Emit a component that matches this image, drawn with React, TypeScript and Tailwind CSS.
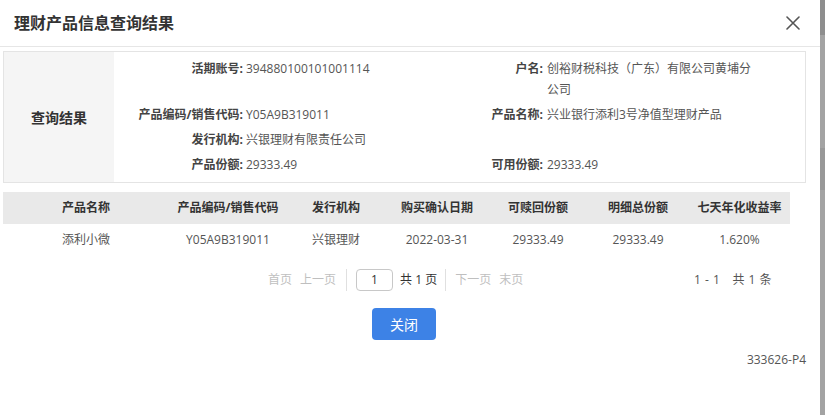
import React from 'react';

const font = "font-['Open_Sans','Noto_Sans_CJK_SC',sans-serif]";

interface InfoRow {
  label: string;
  value: string;
  label2?: string;
  value2?: string;
}

const infoRows: InfoRow[] = [
  { label: '活期账号:', value: '394880100101001114', label2: '户名:', value2: '创裕财税科技（广东）有限公司黄埔分公司' },
  { label: '产品编码/销售代码:', value: 'Y05A9B319011', label2: '产品名称:', value2: '兴业银行添利3号净值型理财产品' },
  { label: '发行机构:', value: '兴银理财有限责任公司' },
  { label: '产品份额:', value: '29333.49', label2: '可用份额:', value2: '29333.49' },
];

const columns = ['产品名称', '产品编码/销售代码', '发行机构', '购买确认日期', '可赎回份额', '明细总份额', '七天年化收益率'];
const rows = [['添利小微', 'Y05A9B319011', '兴银理财', '2022-03-31', '29333.49', '29333.49', '1.620%']];

const gridCols = 'grid grid-cols-[166px_118px_98px_104px_98px_102px_101px]';

export default function App() {
  return (
    <div className={`flex w-[825px] h-[415px] bg-white overflow-hidden ${font}`}>
      <div className="w-[820px] flex flex-col">
        {/* Header */}
        <div className="h-[47px] flex items-center justify-between pl-[14px] pr-[20px] border-b border-[#e6e6e6]">
          <h3 className="text-[16px] font-bold text-[#333] leading-none">理财产品信息查询结果</h3>
          <svg width="14" height="14" viewBox="0 0 14 14" className="text-[#555]">
            <path d="M1 1L13 13M13 1L1 13" stroke="currentColor" strokeWidth="1.6" strokeLinecap="round" />
          </svg>
        </div>

        <div className="px-[3px]">
          {/* Info box */}
          <div className="mt-1 w-[803px] flex border border-[#e4e4e4]">
            <div className="w-[110px] bg-[#f5f5f5] flex items-center justify-center text-[14px] font-bold text-[#333]">
              查询结果
            </div>
            <div className="grid grid-cols-[129px_200px_100px_214px] gap-y-1 pt-[6px] pb-[7px] pr-[48px] text-[12px] leading-[21px]">
              {infoRows.map((r, i) => (
                <React.Fragment key={i}>
                  <div className={`text-right font-bold text-[#444] ${i === 0 ? 'row-span-1' : ''}`}>{r.label}</div>
                  <div className="pl-[3px] text-[#555]">{r.value}</div>
                  <div className="text-right font-bold text-[#444]">{r.label2 ?? ''}</div>
                  <div className="pl-[4px] text-[#555]">{r.value2 ?? ''}</div>
                </React.Fragment>
              ))}
            </div>
          </div>

          {/* Table */}
          <div className="mt-[9px] w-[787px] text-[12px]">
            <div className={`${gridCols} h-8 items-center bg-[#e9e9e9] font-bold text-[#333]`}>
              {columns.map((c) => (
                <div key={c} className="text-center">{c}</div>
              ))}
            </div>
            {rows.map((r, i) => (
              <div key={i} className={`${gridCols} h-8 items-center text-[#555]`}>
                {r.map((v, j) => (
                  <div key={j} className="text-center">{v}</div>
                ))}
              </div>
            ))}
          </div>
        </div>

        {/* Pagination */}
        <div className="mt-3 h-[24px] flex items-center pl-[268px] pr-[48px] text-[12px]">
          <div className="flex items-center text-[#bfbfbf]">
            <span>首页</span>
            <span className="ml-2">上一页</span>
            <span className="ml-[10px] w-px h-[22px] bg-[#e0e0e0]" />
            <span className="ml-[9px] w-[37px] h-[22px] border border-[#c8c8c8] rounded-[4px] flex items-center justify-center text-[#333]">1</span>
            <span className="ml-[7px] text-[#333]">共 1 页</span>
            <span className="ml-[8px] w-px h-[22px] bg-[#e0e0e0]" />
            <span className="ml-[9px]">下一页</span>
            <span className="ml-2">末页</span>
          </div>
          <div className="ml-auto flex text-[#555] tracking-[0.5px]">
            <span>1 - 1</span>
            <span className="ml-3">共 1 条</span>
          </div>
        </div>

        {/* Close button */}
        <div className="mt-4 flex pl-[372px]">
          <button className="w-16 h-8 rounded bg-[#3d82e6] text-white text-[14px]">关闭</button>
        </div>

        <div className="mt-[11px] pr-[14px] text-right text-[12px] text-[#555]">333626-P4</div>
      </div>

      {/* Scrollbar strip */}
      <div className="w-[5px] flex flex-col bg-[#a3a3a3]">
        <div className="h-[35px] bg-[#8e8e8e]" />
        <div className="h-[113px]" />
        <div className="h-[42px] bg-[#989898]" />
      </div>
    </div>
  );
}
